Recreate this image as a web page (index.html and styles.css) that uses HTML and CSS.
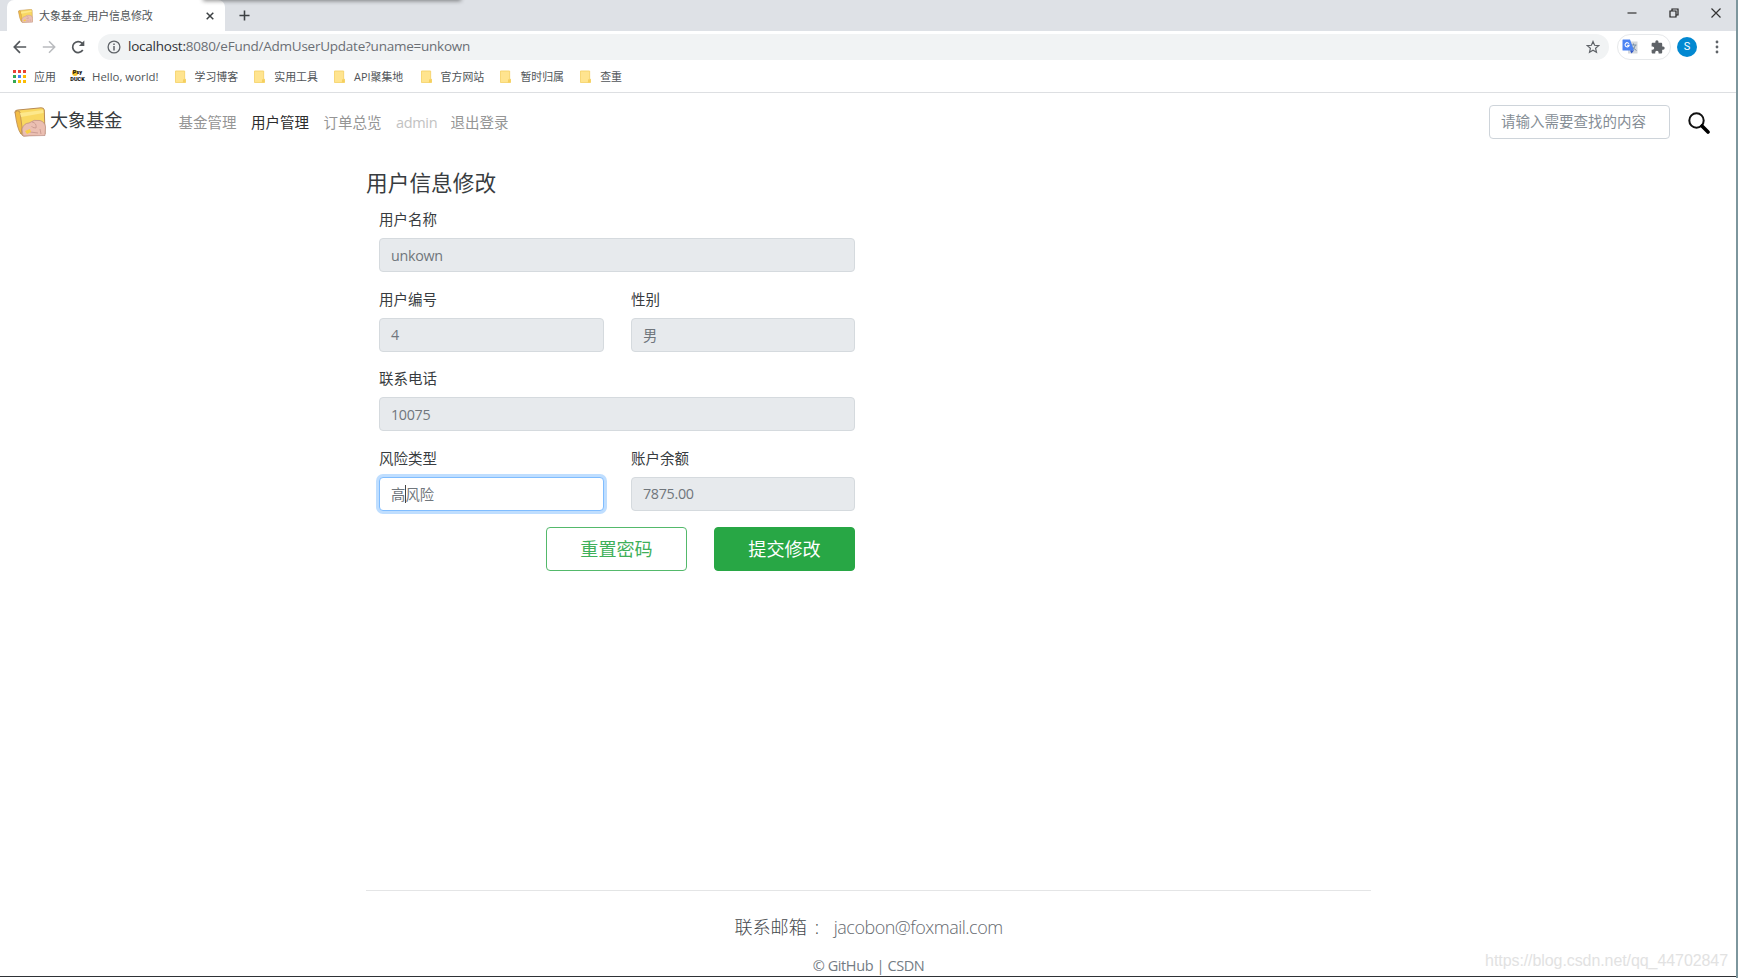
FILE: index.html
```html
<!DOCTYPE html>
<html lang="zh-CN">
<head>
<meta charset="utf-8">
<title>大象基金_用户信息修改</title>
<link rel="stylesheet" href="styles.css">
</head>
<body>
<svg class="defs" width="0" height="0">
  <symbol id="logo" viewBox="0 0 32 30">
    <path d="M1 5 Q1 3 4 3 L27 0.8 Q30 0.6 30.3 3 L31 27 L10 29 Q8 29 7 26Z" fill="#f9d862" stroke="#b98a55" stroke-width="1"/>
    <path d="M1 5 Q4 2.500 6 5 L8 20 L7 27 Q3 22 1 5Z" fill="#f3bd45" stroke="#b98a55" stroke-width=".8"/>
    <path d="M6 6 L29 3 L29.500 6 L7 10Z" fill="#fde88c"/>
    <path d="M8 22 Q10 16 15 16 Q20 12 26 13.500 Q31 15 31.500 20 L31 28.500 L9 29Z" fill="#ebbfb2" stroke="#b98d82" stroke-width=".7"/>
    <path d="M18 15 Q23 16 22 21 Q18 21 17.500 19 M26 22 L27 27 M16 25 L24 26" fill="none" stroke="#c4948b" stroke-width=".8"/>
    <path d="M11 24 L16 22 L17 25 L13 27Z" fill="#f9cf43"/>
  </symbol>
  <symbol id="folder" viewBox="0 0 12 14">
    <path d="M.5 1 H10.500 V10 H11.500 V13.500 H.5Z" fill="#ffe48f" stroke="#f5d36c"/>
    <path d="M9 10 H11.500 V13.500 H8.500Z" fill="#f5cf5e"/>
  </symbol>
</svg>

<header class="chrome">
  <div class="tabstrip">
    <div class="tab">
      <svg class="tab-logo"><use href="#logo"/></svg>
      <span class="tab-title">大象基金_用户信息修改</span>
      <svg class="tab-close" viewBox="0 0 8 8"><path d="M.7 .7 7.300 7.300M7.300 .7 .7 7.300" fill="none" stroke="#3c4043" stroke-width="1.500"/></svg>
    </div>
    <svg class="new-tab" viewBox="0 0 12 12"><path d="M6 .5V11.500M.5 6H11.500" stroke="#3c4043" stroke-width="1.700"/></svg>
    <div class="overlap-shadow"></div>
    <div class="window-buttons">
      <svg width="10" height="10" viewBox="0 0 10 10"><path d="M.5 5H9.500" stroke="#333" stroke-width="1.200"/></svg>
      <svg width="10" height="10" viewBox="0 0 10 10"><path d="M1 3H7V9H1ZM3 3V1H9V7H7" fill="none" stroke="#222" stroke-width="1.200"/></svg>
      <svg width="10" height="10" viewBox="0 0 10 10"><path d="M.5 .5 9.500 9.500M9.500 .5 .5 9.500" stroke="#333" stroke-width="1.200"/></svg>
    </div>
  </div>

  <div class="toolbar">
    <div class="history">
      <svg width="14" height="14" viewBox="0 0 14 14"><path d="M13.200 7H1.500M7 1.200 1.300 7 7 12.800" fill="none" stroke="#54585c" stroke-width="1.700"/></svg>
      <svg width="14" height="14" viewBox="0 0 14 14"><path d="M.8 7H12.500M7 1.200 12.700 7 7 12.800" fill="none" stroke="#b9bbbe" stroke-width="1.500"/></svg>
      <svg width="14" height="14" viewBox="0 0 14 14"><path d="M11.800 10A5.500 5.500 0 1 1 11 3.100L12.500 4.600" fill="none" stroke="#54585c" stroke-width="1.700"/><path d="M13.300 .6V6H7.900Z" fill="#54585c"/></svg>
    </div>
    <div class="omnibox">
      <svg width="14" height="14" viewBox="0 0 14 14"><circle cx="7" cy="7" r="5.900" fill="none" stroke="#5f6368" stroke-width="1.300"/><path d="M7 6V10.500M7 3.400V5" stroke="#5f6368" stroke-width="1.500"/></svg>
      <span class="url"><b>localhost:</b>8080/eFund/AdmUserUpdate?uname=unkown</span>
      <svg class="star" viewBox="0 0 14 14"><path d="M7 1.500 8.600 5.300 12.700 5.600 9.600 8.300 10.500 12.300 7 10.200 3.500 12.300 4.400 8.300 1.300 5.600 5.400 5.300Z" fill="none" stroke="#5f6368" stroke-width="1.200"/></svg>
    </div>
    <div class="extensions">
      <svg width="16" height="15" viewBox="0 0 16 15"><rect x="6" y="2.500" width="9.500" height="12" fill="#d5d8dc"/><path d="M8.500 6H14.500M11.500 4.500V6M13.500 6Q12.500 10 9 11.500M10 7.500Q12 10 14.500 11.500" fill="none" stroke="#7890a8"/><path d="M1 .5H8L12 11.500H1Q.5 11.500 .5 11V1Q.5 .5 1 .5Z" fill="#4c84f3"/><path d="M8 11.500H12L9.500 14.500Z" fill="#2e55c5"/><path d="M7 4.700A2.100 2.100 0 1 0 7.200 6.400H5.200" fill="none" stroke="#fff" stroke-width="1.100"/></svg>
      <svg width="14" height="14" viewBox="1.500 .5 21.500 22.500"><path d="M20.500 11H19V7c0-1.100-.9-2-2-2h-4V3.500a2.500 2.500 0 0 0-5 0V5H4c-1.100 0-2 .9-2 2v3.800h1.500a2.700 2.700 0 0 1 0 5.400H2V20c0 1.100.9 2 2 2h3.800v-1.500a2.700 2.700 0 0 1 5.400 0V22H17c1.100 0 2-.9 2-2v-4h1.500a2.500 2.500 0 0 0 0-5z" fill="#5f6368"/></svg>
    </div>
    <div class="avatar">S</div>
    <svg class="kebab" viewBox="0 0 4 14"><g fill="#5f6368"><circle cx="2" cy="2" r="1.400"/><circle cx="2" cy="7" r="1.400"/><circle cx="2" cy="12" r="1.400"/></g></svg>
  </div>

  <div class="bookmarks">
    <div class="bookmark apps"><svg width="13" height="13" viewBox="0 0 13 13"><g fill="#ea4335"><path d="M0 0h3v3H0zM5 0h3v3H5zM10 0h3v3h-3z"/></g><path d="M0 5h3v3H0zM0 10h3v3H0z" fill="#34a853"/><path d="M5 5h3v3H5z" fill="#4285f4"/><path d="M10 5h3v3h-3zM5 10h3v3H5zM10 10h3v3h-3z" fill="#fbbc04"/></svg><span>应用</span></div>
    <div class="bookmark hello"><span class="duck"><i></i><em>Psy</em><em>DUCK</em></span><span class="latin">Hello, world!</span></div>
    <div class="bookmark"><svg class="folder"><use href="#folder"/></svg><span>学习博客</span></div>
    <div class="bookmark"><svg class="folder"><use href="#folder"/></svg><span>实用工具</span></div>
    <div class="bookmark api"><svg class="folder"><use href="#folder"/></svg><span>API聚集地</span></div>
    <div class="bookmark"><svg class="folder"><use href="#folder"/></svg><span>官方网站</span></div>
    <div class="bookmark"><svg class="folder"><use href="#folder"/></svg><span>暂时归属</span></div>
    <div class="bookmark"><svg class="folder"><use href="#folder"/></svg><span>查重</span></div>
  </div>
</header>

<div class="page">
  <nav class="navbar">
    <svg class="brand-logo"><use href="#logo"/></svg>
    <span class="brand">大象基金</span>
    <div class="links">
      <span>基金管理</span>
      <span class="active">用户管理</span>
      <span>订单总览</span>
      <span class="disabled">admin</span>
      <span>退出登录</span>
    </div>
    <div class="search">请输入需要查找的内容</div>
    <svg class="magnifier" viewBox="0 0 22 22"><circle cx="8.500" cy="8.500" r="7.200" fill="none" stroke="#111" stroke-width="2"/><path d="M14 14 20 20" stroke="#000" stroke-width="3.600" stroke-linecap="round"/></svg>
  </nav>

  <main class="content">
    <h1>用户信息修改</h1>
    <form class="form">
      <div class="field wide"><label>用户名称</label><div class="control">unkown</div></div>
      <div class="field"><label>用户编号</label><div class="control">4</div></div>
      <div class="field"><label>性别</label><div class="control">男</div></div>
      <div class="field wide"><label>联系电话</label><div class="control">10075</div></div>
      <div class="field"><label>风险类型</label><div class="control focused">高<i class="caret"></i>风险</div></div>
      <div class="field"><label>账户余额</label><div class="control">7875.00</div></div>
    </form>
    <div class="actions">
      <div class="btn outline">重置密码</div>
      <div class="btn solid">提交修改</div>
    </div>
  </main>

  <footer class="footer">
    <p class="contact"><span class="contact-label">联系邮箱</span><span class="colon">:</span><span class="mail">jacobon@foxmail.com</span></p>
    <p class="copy">© GitHub | CSDN</p>
  </footer>
  <div class="watermark">https://blog.csdn.net/qq_44702847</div>
</div>
</body>
</html>
```

FILE: styles.css
```css
* { box-sizing: border-box; }

body {
  margin: 0;
  width: 1738px;
  height: 978px;
  overflow: hidden;
  display: flex;
  flex-direction: column;
  background: #fff;
  border-right: 2px solid #7d969d;
  font-family: "Open Sans", "Noto Sans CJK SC", sans-serif;
  color: #383c40;
}

svg { display: block; flex: none; }
.defs { position: absolute; }
span, label, p { white-space: nowrap; }

/* Browser frame */
.chrome {
  height: 93px;
  border-bottom: 1px solid #dddfe2;
}

.tabstrip {
  position: relative;
  height: 31px;
  display: flex;
  align-items: center;
  padding-left: 7px;
  background: #dee1e6;
}

.tab {
  width: 218px;
  height: 31px;
  display: flex;
  align-items: center;
  padding: 0 11px;
  background: #fff;
  border-radius: 7px 7px 0 0;
}

.tab-logo { width: 15px; height: 14px; }
.tab-title { margin: -2px 0 0 6px; font-size: 11px; letter-spacing: -.1px; color: #505458; }
.tab-close { width: 8px; height: 8px; margin-left: auto; }
.new-tab { width: 11px; height: 11px; margin-left: 14px; }

.overlap-shadow {
  position: absolute;
  left: 204px;
  top: -4px;
  width: 256px;
  height: 4px;
  box-shadow: 0 0 4px 1px rgba(0, 0, 0, .45);
}

.window-buttons {
  margin-left: auto;
  display: flex;
  gap: 32px;
  padding: 0 15px 5px 0;
}

.toolbar {
  height: 31px;
  display: flex;
  align-items: center;
  padding-left: 13px;
}

.history { display: flex; gap: 15px; width: 85px; }

.omnibox {
  width: 1511px;
  height: 26px;
  display: flex;
  align-items: center;
  padding: 0 9px;
  border-radius: 13px;
  background: #f1f3f4;
}

.url { margin: -1px 0 0 7px; font-size: 13.5px; letter-spacing: -.24px; color: #6b6f74; }
.url b { font-weight: 400; color: #303134; }
.star { width: 14px; height: 14px; margin-left: auto; }

.extensions {
  width: 54px;
  height: 26px;
  margin-left: 8px;
  padding: 0 5px 0 4px;
  display: flex;
  align-items: center;
  justify-content: space-between;
  border: 1px solid #e6e8ea;
  border-radius: 13px;
}

.avatar {
  width: 20px;
  height: 20px;
  margin-left: 6px;
  border-radius: 50%;
  background: #0288d1;
  color: #fff;
  font: 11px/20px Roboto, sans-serif;
  text-align: center;
}

.kebab { width: 4px; height: 14px; margin-left: 18px; }

.bookmarks {
  height: 28px;
  display: flex;
  align-items: center;
  padding-left: 13px;
  font-size: 10.9px;
  color: #505458;
}

.bookmark { width: 79.8px; display: flex; align-items: center; }
.bookmark.apps { width: 57px; }
.bookmark.apps span { margin-left: 8px; }
.bookmark.hello { width: 104.5px; }
.bookmark.api { width: 86.5px; }
.latin { margin-left: 7px; font-size: 11.4px; }
.folder { width: 11px; height: 13px; }
.folder + span { margin-left: 9px; }

.duck {
  position: relative;
  width: 15px;
  height: 14px;
  display: flex;
  flex-direction: column;
  align-items: center;
  justify-content: space-between;
  font: 900 5.5px/7px Roboto, sans-serif;
  color: #111;
}
.duck em { position: relative; font-style: normal; }
.duck i {
  position: absolute;
  left: 2px;
  top: 1px;
  width: 6px;
  height: 6px;
  border-radius: 50%;
  background: #f5c52e;
}

/* Page */
.page {
  position: relative;
  height: 884px;
  flex: none;
  display: flex;
  flex-direction: column;
  border-bottom: 1px solid #2e3236;
}

.navbar {
  height: 58px;
  display: flex;
  align-items: center;
  padding: 0 26px 0 14px;
}

.brand-logo { width: 32px; height: 30px; }
.brand { margin: -6px 0 0 4px; font-size: 18.1px; }

.links {
  display: flex;
  align-items: baseline;
  gap: 14.500px;
  margin: -1px 0 0 56px;
  font-size: 14.5px;
  color: #959595;
}
.links .active { color: #2c2c2c; }
.links .disabled { width: 40px; color: #c2c2c2; letter-spacing: -.3px; }

.search {
  width: 181px;
  height: 34px;
  margin-left: auto;
  padding-left: 11px;
  border: 1px solid #ced4da;
  border-radius: 4px;
  font-size: 14.5px;
  line-height: 32px;
  color: #868e96;
}
.magnifier { width: 22px; height: 22px; margin: 2px 0 0 18px; }

.content { width: 489px; margin-left: 366px; }

h1 {
  margin: 16px 0 10px;
  font-size: 21.7px;
  line-height: 32px;
  font-weight: 400;
}

.form {
  display: grid;
  grid-template-columns: 225px 224px;
  column-gap: 27px;
  row-gap: 16.500px;
  padding-left: 13px;
}
.wide { grid-column: 1 / 3; }

label {
  display: block;
  margin-bottom: 7px;
  font-size: 14.5px;
  line-height: 22px;
}

.control {
  height: 34px;
  display: flex;
  align-items: center;
  padding-left: 11px;
  border: 1px solid #d5dade;
  border-radius: 4px;
  background: #e7eaed;
  font-size: 14.3px;
  letter-spacing: -.3px;
  color: #70767c;
}
.focused {
  border-color: #80bdff;
  background: #fff;
  box-shadow: 0 0 0 3px #bfdeff;
  letter-spacing: .1px;
}
.caret { width: 1px; height: 18px; margin-right: -1px; background: #444; }

.actions {
  display: flex;
  justify-content: flex-end;
  gap: 27px;
  margin-top: 16px;
}
.btn {
  width: 141px;
  height: 44px;
  border: 1px solid #28a745;
  border-radius: 4px;
  font-size: 18.1px;
  line-height: 42px;
  text-align: center;
}
.outline { color: #3fb05a; border-color: #53b96b; }
.solid { color: #fff; background: #28a745; }

.footer {
  width: 1005px;
  height: 86px;
  margin: auto 0 0 366px;
  border-top: 1px solid #e4e5e6;
  display: flex;
  flex-direction: column;
  align-items: center;
}
.footer p { margin: 0; }

.contact {
  display: flex;
  margin-top: 21px !important;
  font-size: 18.1px;
  line-height: 30px;
  color: #44484c;
  font-weight: 300;
}
.colon { width: 27px; padding-left: 8px; }
.mail { color: #666a70; font-size: 18px; letter-spacing: -.5px; }
.copy { margin-top: 13px !important; font-size: 14.5px; line-height: 22px; letter-spacing: -.4px; color: #747c84; }

.watermark {
  position: absolute;
  right: 8px;
  bottom: 5px;
  font: 16px/20px "Liberation Sans", Arial, sans-serif;
  letter-spacing: -.08px;
  color: #e2e2e2;
}
```
